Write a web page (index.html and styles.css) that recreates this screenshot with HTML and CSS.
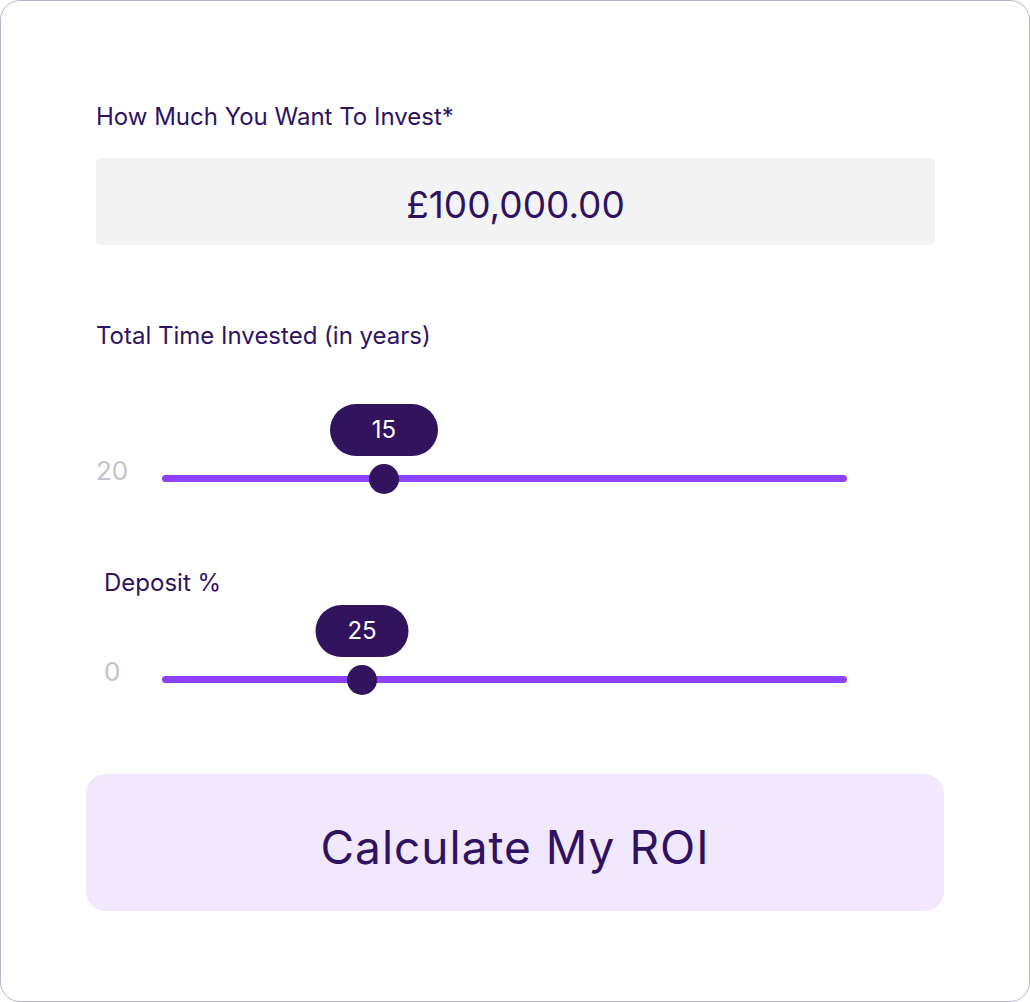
FILE: index.html
```html
<!DOCTYPE html>
<html lang="en">
<head>
<meta charset="utf-8">
<title>ROI Calculator</title>
<link rel="stylesheet" href="styles.css">
</head>
<body>
<div class="card">
  <div class="label label-first">How Much You Want To Invest*</div>
  <div class="amount">£100,000.00</div>

  <div class="label label-time">Total Time Invested (in years)</div>
  <div class="slider slider-time">
    <span class="min">20</span>
    <div class="track">
      <div class="thumb" style="left: 32.4%">
        <div class="bubble bubble-wide">15</div>
      </div>
    </div>
  </div>

  <div class="label label-deposit">Deposit %</div>
  <div class="slider slider-deposit">
    <span class="min min-indent">0</span>
    <div class="track">
      <div class="thumb" style="left: 29.2%">
        <div class="bubble bubble-narrow">25</div>
      </div>
    </div>
  </div>

  <button class="cta" type="button">Calculate My ROI</button>
</div>
</body>
</html>
```

FILE: styles.css
```css
* {
  box-sizing: border-box;
}

html, body {
  margin: 0;
  padding: 0;
  background: #ffffff;
}

body {
  font-family: Inter, "Noto Sans", "DejaVu Sans", sans-serif;
  color: #2f1360;
}

.card {
  width: 1030px;
  height: 1002px;
  border: 1px solid #b9b5c9;
  border-radius: 20px;
  padding: 102px 85px 0 85px;
  background: #ffffff;
  display: flex;
  flex-direction: column;
}

.label {
  font-size: 24px;
  line-height: 28px;
  color: #2f1360;
  padding-left: 10px;
}

.amount {
  margin: 27px 9px 0 10px;
  height: 87px;
  padding-top: 5px;
  background: #f3f3f3;
  border-radius: 5px;
  display: flex;
  align-items: center;
  justify-content: center;
  font-size: 37px;
  color: #2f1360;
}

.label-time {
  margin-top: 77px;
}

.slider {
  position: relative;
  display: grid;
  grid-template-columns: 66px 685px;
  align-items: start;
  height: 30px;
  padding-left: 10px;
}

.slider-time {
  margin-top: 113px;
}

.label-deposit {
  margin-top: 76px;
  padding-left: 18px;
}

.slider-deposit {
  margin-top: 67px;
}

.min {
  font-size: 26px;
  line-height: 30px;
  color: #c4c2cd;
  margin-top: -7px;
}

.min-indent {
  padding-left: 8px;
}

.track {
  position: relative;
  height: 7px;
  margin-top: 12px;
  background: #8d41fb;
  border-radius: 4px;
}

.thumb {
  position: absolute;
  top: 50%;
  width: 30px;
  height: 30px;
  margin: -15px 0 0 -15px;
  border-radius: 50%;
  background: #32135e;
}

.bubble {
  position: absolute;
  bottom: 38px;
  left: 50%;
  transform: translateX(-50%);
  height: 52px;
  border-radius: 26px;
  background: #32135e;
  color: #ffffff;
  font-size: 24px;
  display: flex;
  align-items: center;
  justify-content: center;
}

.bubble-wide {
  width: 108px;
}

.bubble-narrow {
  width: 93px;
}

.cta {
  margin-top: 80px;
  height: 137px;
  width: 858px;
  padding: 9px 0 0 0;
  border: none;
  border-radius: 20px;
  background: #f1e8fd;
  color: #2f1360;
  font-family: Inter, "Noto Sans", "DejaVu Sans", sans-serif;
  font-size: 46px;
  letter-spacing: 1px;
  cursor: pointer;
}
```
